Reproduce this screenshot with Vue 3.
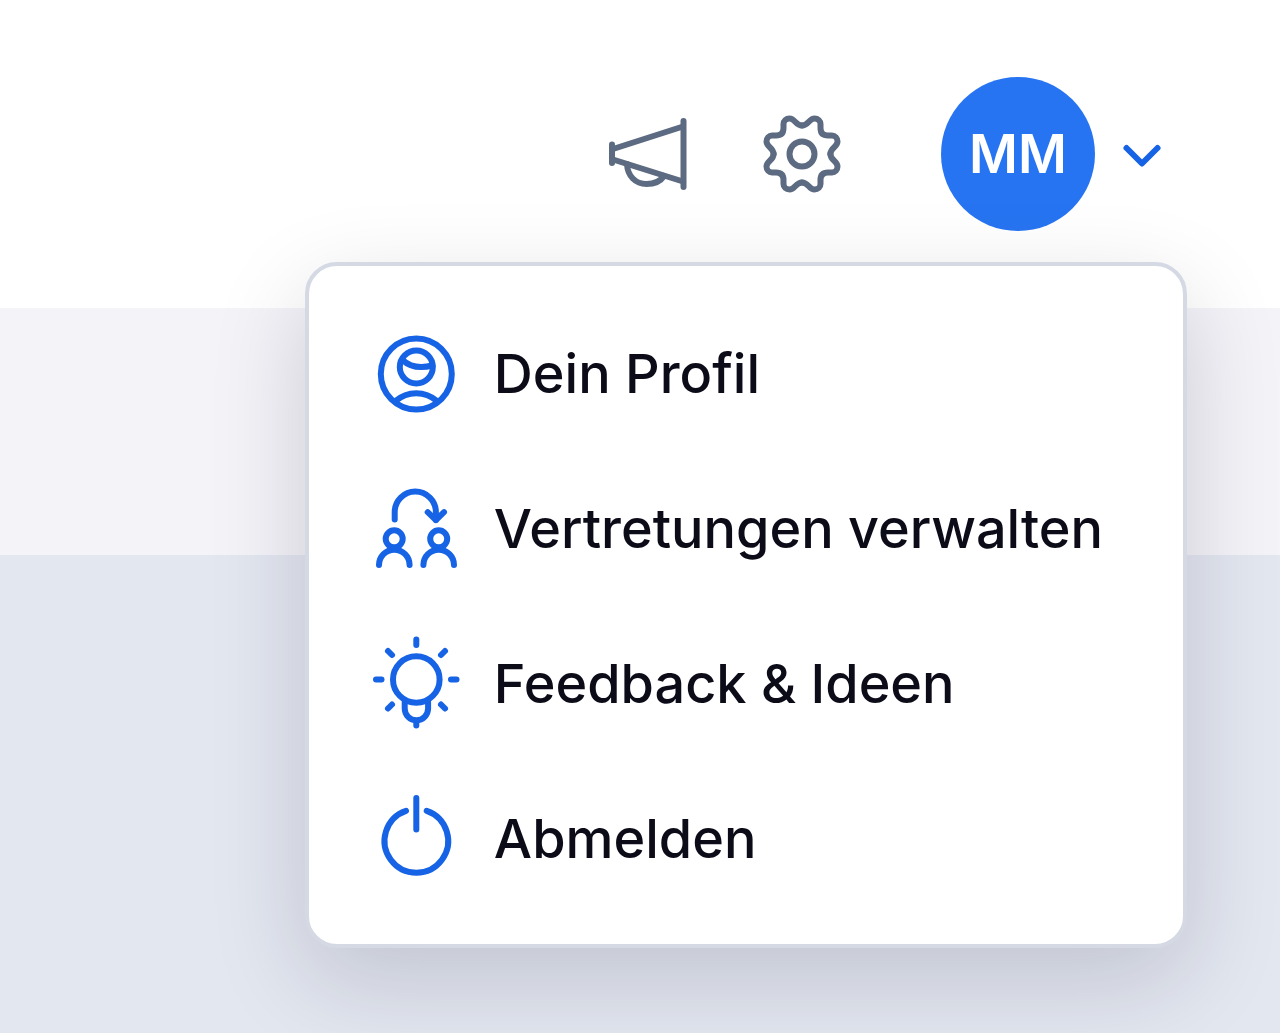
<!-- AccountMenu.vue -->
<template>
  <div class="page">
    <header class="header">
      <button type="button" class="icon-button" aria-label="Neuigkeiten">
        <svg class="icon" viewBox="0 0 96 96">
          <path d="M83.5 15V81" />
          <path d="M12 38.500V57" />
          <path d="M13 43L83 20.500" />
          <path d="M13 53.500L83 75.500" />
          <path d="M27 58C27.500 70 35.500 78 46.500 78C54 78 60 76 64 70" />
        </svg>
      </button>

      <button type="button" class="icon-button" aria-label="Einstellungen">
        <svg class="icon" viewBox="-48 -48 96 96">
          <circle r="12.500" />
          <path
            v-for="angle in [0, 90, 180, 270]"
            :key="`gear-${angle}`"
            :transform="`rotate(${angle})`"
            d="M0-28.400C6.500-28.400 7-35.500 12.500-35.500C16-35.500 18.500-33 18.500-30V-26C18.500-21 21-18.500 26-18.500H30C33-18.500 35.500-16 35.500-12.500C35.500-7 28.400-6.500 28.400 0"
          />
        </svg>
      </button>

      <button
        type="button"
        class="account"
        aria-label="Benutzerkonto MM"
        :aria-expanded="isOpen"
        @click="isOpen = !isOpen"
      >
        <span class="avatar">MM</span>
        <svg class="chevron" viewBox="0 0 40 40">
          <path d="M4.500 14L20 29.500L35.500 14" />
        </svg>
      </button>

      <nav v-if="isOpen" class="menu">
        <ul class="menu-list">
          <li v-for="item in menuItems" :key="item.label">
            <a :href="item.link" class="menu-link">
              <svg class="icon" viewBox="0 0 96 96">
                <path v-for="(d, index) in item.paths" :key="`path-${index}`" :d="d" />
                <circle
                  v-for="(c, index) in item.circles"
                  :key="`circle-${index}`"
                  :cx="c.x"
                  :cy="c.y"
                  :r="c.r"
                />
              </svg>
              <span>{{ item.label }}</span>
            </a>
          </li>
        </ul>
      </nav>
    </header>

    <div class="band"></div>
    <main class="content"></main>
  </div>
</template>

<script setup>
import { ref } from 'vue'

const isOpen = ref(true)

const menuItems = [
  {
    label: 'Dein Profil',
    link: '#profil',
    circles: [
      { x: 48.3, y: 48, r: 35.5 },
      { x: 48.3, y: 41, r: 16.5 },
    ],
    paths: [
      'M34.500 34C42 41 53 42.500 64.500 39.500',
      'M27.500 75C39.500 64.500 57 64.500 69 75',
    ],
  },
  {
    label: 'Vertretungen verwalten',
    link: '#vertretungen',
    circles: [
      { x: 26.2, y: 57.8, r: 8.5 },
      { x: 70.7, y: 57.8, r: 8.5 },
    ],
    paths: [
      'M26.700 38.500V31.200A20.600 20.600 0 0 1 67.900 31.200V39',
      'M59.700 31.200L67.900 39L76 31.200',
      'M11 84A15.300 15.300 0 0 1 41.600 84',
      'M55.400 84A15.300 15.300 0 0 1 86 84',
    ],
  },
  {
    label: 'Feedback & Ideen',
    link: '#feedback',
    circles: [{ x: 48.3, y: 43.5, r: 23.3 }],
    paths: [
      'M36.700 66V72.500A11.700 11.700 0 0 0 60.100 72.500V66',
      'M48.300 85V89.500',
      'M48.300 3.500V9',
      'M8 43.500H13.500',
      'M83 43.500H88.500',
      'M20 15L24 19',
      'M77 15L73 19',
      'M24 68.500L20 72.500',
      'M73 68.500L77 72.500',
    ],
  },
  {
    label: 'Abmelden',
    link: '#abmelden',
    circles: [],
    paths: [
      'M48.300 7V38.500',
      'M38 19.800A31.800 31.800 0 1 0 58.700 19.800',
    ],
  },
]
</script>

<style scoped>
.page {
  display: flex;
  flex-direction: column;
  min-height: 100vh;
  overflow: hidden;
  background: #ffffff;
  font-family: Inter, "Liberation Sans", sans-serif;
}

.header {
  position: relative;
  display: flex;
  justify-content: flex-end;
  align-items: center;
  height: 308px;
  padding: 0 118px 0 0;
  box-sizing: border-box;
  background: #ffffff;
}

.band {
  height: 247px;
  background: #f4f3f8;
}

.content {
  flex: 1;
  background: #e3e7f0;
}

button {
  padding: 0;
  border: 0;
  background: none;
  font-family: inherit;
  cursor: pointer;
}

.icon-button {
  display: flex;
  margin-right: 58px;
  color: #5c6b82;
}

.icon {
  width: 96px;
  height: 96px;
  flex: none;
  fill: none;
  stroke: currentColor;
  stroke-width: 6;
  stroke-linecap: round;
  stroke-linejoin: round;
}

.account {
  display: flex;
  align-items: center;
  gap: 27px;
  margin-left: 33px;
}

.avatar {
  display: flex;
  align-items: center;
  justify-content: center;
  width: 154px;
  height: 154px;
  border-radius: 50%;
  background: #2774f2;
  color: #ffffff;
  font-size: 53px;
  font-weight: 600;
}

.chevron {
  width: 40px;
  height: 40px;
  fill: none;
  stroke: #1763e5;
  stroke-width: 6;
  stroke-linecap: round;
  stroke-linejoin: round;
}

.menu {
  position: absolute;
  top: 262px;
  right: 93px;
  z-index: 1;
  padding: 30px 80px 28px 59px;
  border: 4px solid #d5d9e4;
  border-radius: 32px;
  background: #ffffff;
  box-shadow: 0 32px 96px rgba(20, 10, 40, 0.16);
}

.menu-list {
  margin: 0;
  padding: 0;
  list-style: none;
}

.menu-link {
  display: flex;
  align-items: center;
  gap: 30px;
  height: 155px;
  color: #1763e5;
  font-size: 54px;
  font-weight: 500;
  text-decoration: none;
  white-space: nowrap;
}

.menu-link span {
  color: #0c0b18;
}
</style>
